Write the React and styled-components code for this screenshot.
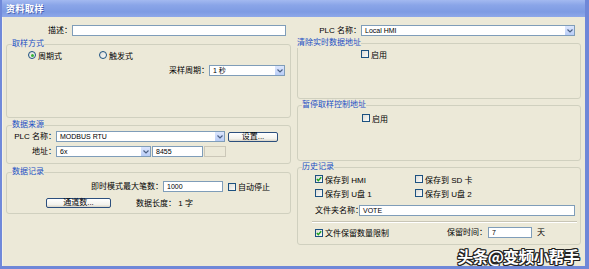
import React from 'react';
import styled, { createGlobalStyle } from 'styled-components';

const GlobalStyle = createGlobalStyle`
  html, body { margin: 0; padding: 0; background: #ece9d8; }
  body {
    font-family: "Liberation Sans", "Noto Sans CJK SC", sans-serif;
    font-size: 8px;
    color: #000;
  }
`;

const Window = styled.div`
  position: relative;
  width: 589px;
  height: 269px;
  box-sizing: border-box;
  display: flex;
  flex-direction: column;
  background: #ece9d8;
  border-left: 2px solid #7089da;
  border-right: 4px solid #6f87d8;
  border-bottom: 3px solid #6f87d8;
  overflow: hidden;
`;

const TitleBar = styled.div`
  height: 17px;
  margin: 0 -4px 0 -2px;
  padding-left: 6px;
  display: flex;
  align-items: center;
  background: linear-gradient(#a3b9f0 0%, #8aa5e8 30%, #7e9be3 70%, #8ea8e9 100%);
  color: #fff;
  font-size: 9px;
  font-weight: bold;
  letter-spacing: 0.5px;
  text-shadow: 1px 1px 0 #4a63b4;
`;

const Body = styled.div`
  flex: 1;
  display: flex;
  gap: 6px;
  padding: 8px 4px 0 3px;
  border-left: 1px solid #f4f2e8;
`;

const Column = styled.div`
  width: ${p => p.$w}px;
  display: flex;
  flex-direction: column;
`;

const Row = styled.div`
  display: flex;
  align-items: center;
  height: ${p => p.$h || 11}px;
  margin-top: ${p => p.$mt || 0}px;
  margin-left: ${p => p.$ml || 0}px;
  justify-content: ${p => (p.$end ? 'flex-end' : 'flex-start')};
`;

const Label = styled.span`
  width: ${p => p.$w}px;
  flex: none;
  text-align: ${p => (p.$left ? 'left' : 'right')};
  white-space: nowrap;
  line-height: 11px;
`;

const Text = styled.span`
  margin-left: ${p => p.$ml || 0}px;
  white-space: nowrap;
  line-height: 11px;
`;

const Group = styled.fieldset`
  margin: ${p => p.$mt}px 0 0;
  padding: 0 5px;
  height: ${p => p.$h}px;
  box-sizing: border-box;
  border: 1px solid #d0d0bf;
  border-radius: 3px;
  min-width: 0;
`;

const Legend = styled.legend`
  padding: 0;
  margin-left: ${p => p.$ml || 0}px;
  color: #1b4fc4;
  font-size: 8px;
  line-height: 10px;
`;

const Input = styled.div`
  width: ${p => p.$w}px;
  height: 11px;
  margin-left: ${p => p.$ml || 0}px;
  box-sizing: border-box;
  border: 1px solid #7f9db9;
  background: ${p => (p.$disabled ? '#ece9d8' : '#fff')};
  border-color: ${p => (p.$disabled ? '#cbc7b8' : '#7f9db9')};
  padding-left: 3px;
  font-size: 7px;
  line-height: 9px;
  flex: none;
`;

const SelectBox = styled.div`
  width: ${p => p.$w}px;
  height: 11px;
  box-sizing: border-box;
  border: 1px solid #7f9db9;
  background: #fff;
  display: flex;
  flex: none;
`;

const SelectText = styled.span`
  flex: 1;
  padding-left: 3px;
  font-size: 7px;
  line-height: 9px;
  white-space: nowrap;
`;

const DropButton = styled.span`
  width: 9px;
  display: flex;
  align-items: center;
  justify-content: center;
  background: linear-gradient(#dce6fd, #b9cdf7);
  border-left: 1px solid #fff;
`;

const Button = styled.div`
  width: ${p => p.$w}px;
  height: 10px;
  margin-left: ${p => p.$ml || 0}px;
  box-sizing: border-box;
  border: 1px solid #2c4f7d;
  border-radius: 2px;
  background: linear-gradient(#ffffff, #f3f2ec 70%, #d8d3c6);
  display: flex;
  align-items: center;
  justify-content: center;
  font-size: 8px;
  line-height: 8px;
  flex: none;
`;

const CheckItem = styled.div`
  display: flex;
  align-items: center;
  width: ${p => (p.$w ? `${p.$w}px` : 'auto')};
  margin-left: ${p => p.$ml || 0}px;
  flex: none;
  white-space: nowrap;
`;

const CheckBox = styled.span`
  width: 8px;
  height: 8px;
  box-sizing: border-box;
  border: 1px solid #1c5180;
  background: linear-gradient(135deg, #dcdcd7, #fbfbf9);
  margin-right: 2px;
  display: flex;
  align-items: center;
  justify-content: center;
`;

const RadioCircle = styled.span`
  width: 8px;
  height: 8px;
  box-sizing: border-box;
  border: 1px solid #1c5180;
  border-radius: 50%;
  background: linear-gradient(135deg, #dcdcd7, #fbfbf9);
  margin-right: 2px;
  display: flex;
  align-items: center;
  justify-content: center;
  &::after {
    content: '';
    display: ${p => (p.$on ? 'block' : 'none')};
    width: 3px;
    height: 3px;
    border-radius: 50%;
    background: #36b336;
  }
`;

const Separator = styled.div`
  height: 0;
  margin: ${p => p.$mt}px -2px 0 9px;
  border-top: 1px solid #c8c5b6;
  border-bottom: 1px solid #fff;
`;

const Watermark = styled.div`
  position: absolute;
  right: 6px;
  bottom: 0;
  font-family: "Noto Sans CJK SC", sans-serif;
  font-size: 16px;
  line-height: 20px;
  font-weight: bold;
  color: #fff;
  letter-spacing: -0.8px;
  text-shadow: -1px -1px 0 #222, 1px -1px 0 #222, -1px 1px 0 #222, 1px 1px 0 #222,
    0 1px 0 #222, 0 -1px 0 #222, 1px 0 0 #222, -1px 0 0 #222;
`;

const Chevron = () => (
  <svg width="6" height="4" viewBox="0 0 6 4">
    <polyline points="0.5,0.5 3,3 5.5,0.5" fill="none" stroke="#4d6185" strokeWidth="1.2" />
  </svg>
);

const Select = ({ w, value }) => (
  <SelectBox $w={w}>
    <SelectText>{value}</SelectText>
    <DropButton><Chevron /></DropButton>
  </SelectBox>
);

const Check = ({ on, label, w, ml }) => (
  <CheckItem $w={w} $ml={ml}>
    <CheckBox>
      {on && (
        <svg width="6" height="6" viewBox="0 0 6 6">
          <polyline points="0.8,3 2.3,4.6 5.2,1.2" fill="none" stroke="#21a121" strokeWidth="1.4" />
        </svg>
      )}
    </CheckBox>
    {label}
  </CheckItem>
);

const Radio = ({ on, label, w, ml }) => (
  <CheckItem $w={w} $ml={ml}>
    <RadioCircle $on={on} />
    {label}
  </CheckItem>
);

export default function App() {
  return (
    <>
      <GlobalStyle />
      <Window>
        <TitleBar>资料取样</TitleBar>
        <Body>
          <Column $w={286}>
            <Row>
              <Label $w={66}>描述：</Label>
              <Input $w={214} />
            </Row>

            <Group $mt={3} $h={79}>
              <Legend>取样方式</Legend>
              <Row $h={10} $mt={1}>
                <Radio on label="周期式" w={71} ml={16} />
                <Radio label="触发式" />
              </Row>
              <Row $mt={5} $end>
                <Text>采样周期：</Text>
                <Select w={76} value="1 秒" />
              </Row>
            </Group>

            <Group $mt={2} $h={44}>
              <Legend>数据来源</Legend>
              <Row $mt={1}>
                <Label $w={44}>PLC 名称：</Label>
                <Select w={169} value="MODBUS RTU" />
                <Button $w={50} $ml={3}>设置...</Button>
              </Row>
              <Row $mt={4}>
                <Label $w={44}>地址：</Label>
                <Select w={95} value="6x" />
                <Input $w={51} $ml={1}>8455</Input>
                <Input $w={22} $ml={1} $disabled />
              </Row>
            </Group>

            <Group $mt={3} $h={47}>
              <Legend>数据记录</Legend>
              <Row $mt={4}>
                <Label $w={151}>即时模式最大笔数：</Label>
                <Input $w={60}>1000</Input>
                <Check label="自动停止" ml={5} />
              </Row>
              <Row $h={10} $mt={6}>
                <Button $w={65} $ml={34}>通道数...</Button>
                <Text $ml={25}>数据长度： 1 字</Text>
              </Row>
            </Group>
          </Column>

          <Column $w={284}>
            <Row>
              <Label $w={64}>PLC 名称：</Label>
              <Select w={214} value="Local HMI" />
            </Row>

            <Group $mt={2} $h={61}>
              <Legend $ml={-6}>清除实时数据地址</Legend>
              <Row $h={10} $mt={1}>
                <Check label="启用" ml={58} />
              </Row>
            </Group>

            <Group $mt={1} $h={61}>
              <Legend $ml={-1}>暂停取样控制地址</Legend>
              <Row $h={10} $mt={3}>
                <Check label="启用" ml={59} />
              </Row>
            </Group>

            <Group $mt={1} $h={83}>
              <Legend $ml={-1}>历史记录</Legend>
              <Row $h={10} $mt={2}>
                <Check on label="保存到 HMI" w={100} ml={12} />
                <Check label="保存到 SD 卡" />
              </Row>
              <Row $h={10} $mt={4}>
                <Check label="保存到 U盘 1" w={100} ml={12} />
                <Check label="保存到 U盘 2" />
              </Row>
              <Row $mt={7} $ml={12}>
                <Label $w={44} $left>文件夹名称：</Label>
                <Input $w={216}>VOTE</Input>
              </Row>
              <Separator $mt={5} />
              <Row $mt={4} $ml={12}>
                <Check on label="文件保留数量限制" w={132} />
                <Label $w={41} $left>保留时间：</Label>
                <Input $w={44}>7</Input>
                <Text $ml={5}>天</Text>
              </Row>
            </Group>
          </Column>
        </Body>
        <Watermark>头条@变频小帮手</Watermark>
      </Window>
    </>
  );
}
